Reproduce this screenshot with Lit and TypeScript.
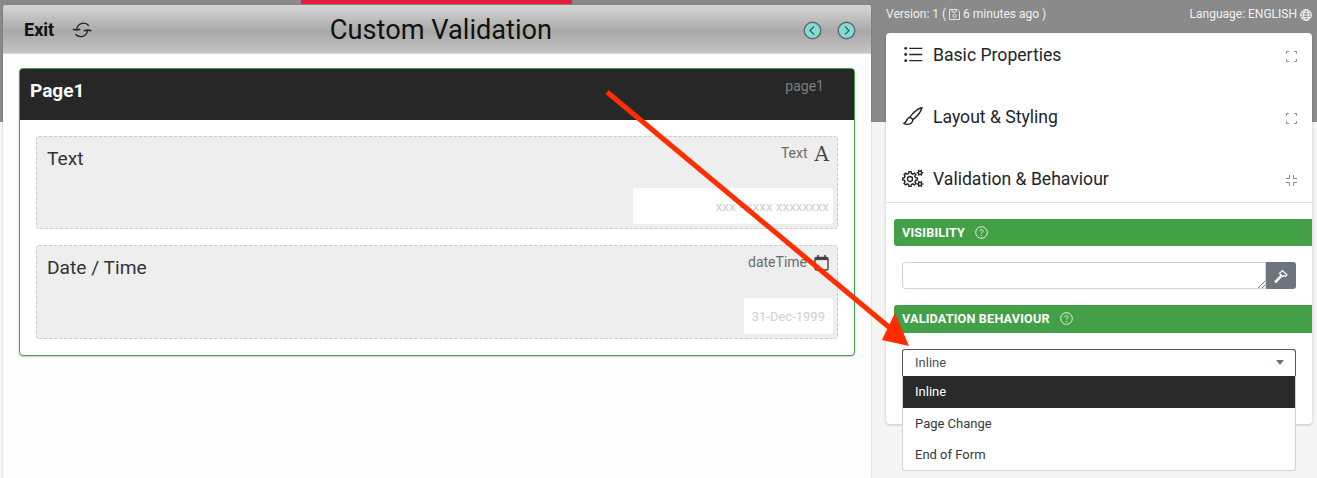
import { LitElement, html, css, svg } from "lit";
import { customElement } from "lit/decorators.js";

function gearPath(cx: number, cy: number, ro: number, ri: number, teeth: number) {
  const pts: string[] = [];
  const step = (Math.PI * 2) / teeth;
  for (let i = 0; i < teeth; i++) {
    const a = i * step;
    const offs: Array<[number, number]> = [[-0.32, ri], [-0.18, ro], [0.18, ro], [0.32, ri]];
    for (const [o, r] of offs) {
      const t = a + o * step;
      pts.push(`${(cx + r * Math.cos(t)).toFixed(2)} ${(cy + r * Math.sin(t)).toFixed(2)}`);
    }
  }
  return `M${pts.join("L")}Z`;
}

const sync = svg`<svg width="20" height="16" viewBox="0 0 20 16" fill="none" stroke="#222" stroke-width="1.400"><path d="M16.800 3.800C13.500-.5 6 .3 4.500 7.500"/><path d="M.8 7.300L4.500 8 8.300 7.300"/><path d="M15.500 8.500C14.500 15.500 7 16 3.500 12.300"/><path d="M11.800 8.800L15.500 8 19.300 8.800"/></svg>`;
const circ = (d: string) => svg`<svg width="19" height="19" viewBox="0 0 19 19"><circle cx="9.500" cy="9.500" r="8.300" fill="#7fded5" stroke="#666" stroke-width="1.400"/><path d="${d}" fill="none" stroke="#555" stroke-width="1.200"/></svg>`;
const listI = svg`<svg width="22" height="20" viewBox="0 0 22 20" fill="none" stroke="#212529" stroke-width="1.300"><circle cx="3.700" cy="3.300" r="1.400" fill="#212529" stroke="none"/><circle cx="3.700" cy="9.500" r="1.400" fill="#212529" stroke="none"/><circle cx="3.700" cy="15.700" r="1.400" fill="#212529" stroke="none"/><path d="M7.300 3.300h13M7.300 9.500h13M7.300 15.700h13"/></svg>`;
const brush = svg`<svg width="22" height="20" viewBox="0 0 22 20" fill="none" stroke="#212529" stroke-width="1.400"><path d="M20 .5C16 1.500 10.500 6 8 10l3 2.600C15 9.500 19 5 20 .5z"/><path d="M8 10.300C4.500 10.500 5 15 2 16.500c2.500 1.500 8.500 1.500 9-4.300"/></svg>`;
const gears = svg`<svg width="22" height="20" viewBox="0 0 22 20" fill="none" stroke="#212529"><path d="${gearPath(8, 10, 7.4, 5.7, 8)}" stroke-width="1.400"/><circle cx="8" cy="10" r="2.500" stroke-width="1.300"/><path d="${gearPath(18, 3.7, 3.4, 2.3, 6)}" fill="#212529" stroke="none"/><circle cx="18" cy="3.700" r="1" fill="#fff" stroke="none"/><path d="${gearPath(18, 15, 3.4, 2.3, 6)}" fill="#212529" stroke="none"/><circle cx="18" cy="15" r="1" fill="#fff" stroke="none"/></svg>`;
const expand = svg`<svg class="tog" width="11" height="11" viewBox="0 0 11 11" fill="none" stroke="#888"><path d="M.5 2.800V.5h2.300M8.200 .5h2.300v2.300M10.500 8.200v2.300H8.200M2.800 10.500H.5V8.200"/></svg>`;
const compress = svg`<svg class="tog" width="11" height="11" viewBox="0 0 11 11" fill="none" stroke="#888"><path d="M3.500 0v3.500H0M7.500 0v3.500H11M7.500 11V7.500H11M3.500 11V7.500H0"/></svg>`;
const help = svg`<svg width="13" height="13" viewBox="0 0 13 13" fill="none" stroke="#e8f3e8"><circle cx="6.500" cy="6.500" r="5.800"/><path d="M4.800 5.200c0-1 .8-1.500 1.700-1.500s1.700.6 1.700 1.400c0 1.200-1.700 1.200-1.700 2.500"/><path d="M6.500 9v1"/></svg>`;
const hammer = svg`<svg width="14" height="14" viewBox="0 0 14 14" fill="none" stroke="#fff" stroke-width="1.200"><path d="M1 12.500l1 1 6-6.500-1-1z"/><path d="M5.500 4.500L8.500 1.500l4.500 4.500-1.500 1.500-1.500-1-1.200 1.200z"/></svg>`;
const calendar = svg`<svg width="15" height="17" viewBox="0 0 15 17" fill="none" stroke="#444" stroke-width="1.400"><rect x="1" y="3.500" width="13" height="12.500" rx="1.500"/><path d="M1 5h13" stroke-width="2.200"/><path d="M4 1v3M11 1v3" stroke-width="1.600"/></svg>`;
const save = svg`<svg width="11" height="11" viewBox="0 0 11 11" fill="none" stroke="#eee" stroke-width=".9"><path d="M.5.500h8l2 2v8H.500z"/><path d="M3 .5v2.500h4V.5"/><circle cx="5.500" cy="6.800" r="1.600"/></svg>`;
const globe = svg`<svg width="12" height="12" viewBox="0 0 11 11" fill="none" stroke="#fff" stroke-width=".9"><circle cx="5.500" cy="5.500" r="4.900"/><ellipse cx="5.500" cy="5.500" rx="2.200" ry="4.900"/><path d="M.6 5.500h9.800M1.200 3h8.600M1.200 8h8.600"/></svg>`;

@customElement("app-root")
export class AppRoot extends LitElement {
  static styles = css`
    :host { display: block; width: 1317px; height: 478px; overflow: hidden; position: relative; font-family: Roboto, "Liberation Sans", sans-serif; background: linear-gradient(#8a8a8a 0 122px, #f5f5f5 122px); }
    .layout { display: grid; grid-template-columns: 868px 426px; column-gap: 15px; padding-left: 3px; height: 478px; }
    .canvas { margin-top: 5px; background: #fdfdfd; box-shadow: 0 0 2px rgba(0,0,0,.25); border-radius: 3px 3px 0 0; position: relative; }
    .ribbon { position: absolute; left: 298px; top: -5px; width: 271px; height: 4px; background: #e71d3d; }
    .head { height: 49px; box-sizing: border-box; padding: 2px 15px 0 21px; display: grid; grid-template-columns: 1fr auto 1fr; align-items: center; background: linear-gradient(#d6d6d6, #a9a9a9 55%, #c4c4c4); border-bottom: 1px dashed #d8d8d8; border-radius: 3px 3px 0 0; }
    .left { display: flex; align-items: center; gap: 18px; font-size: 18px; font-weight: 700; color: #111; }
    .left span { margin-bottom: 2px; }
    .title { font-size: 27.200px; color: #111; line-height: 46px; margin-left: 2px; }
    .nav { display: flex; justify-content: flex-end; gap: 15px; }
    .body { padding: 14px 16px 0; }
    .page { border: 1px solid #43a047; border-radius: 4px; height: 288px; box-sizing: border-box; box-shadow: 0 1px 2px rgba(0,0,0,.2); background: #fff; }
    .page-head { height: 51px; background: #272727; display: flex; justify-content: space-between; padding: 9px 30px 0 10px; box-sizing: border-box; border-radius: 2px 2px 0 0; }
    .page-title { font-size: 19px; font-weight: 700; color: #fff; line-height: 25px; }
    .page-id { font-size: 14px; color: #7d7d7d; line-height: 16px; }
    .fields { display: flex; flex-direction: column; gap: 16px; padding: 16px 16px 0; }
    .field { background: #eee; border: 1px dashed #cbcbcb; border-radius: 3px; box-sizing: border-box; display: flex; flex-direction: column; padding: 8px 4px 4px 10px; }
    .f1 { height: 93px; } .f2 { height: 94px; }
    .row { display: flex; justify-content: space-between; }
    .label { font-size: 19.200px; color: #333; line-height: 28px; }
    .type { display: flex; align-items: flex-start; gap: 7px; font-size: 14px; color: #6b6b6b; padding-right: 4px; line-height: 16px; }
    .letter { font-family: "DejaVu Serif", serif; font-size: 20px; line-height: 18px; color: #444; }
    .input { margin-top: auto; align-self: flex-end; height: 36px; background: #fff; border-radius: 3px; display: flex; align-items: center; justify-content: flex-end; font-size: 13px; color: #cfcfcf; box-sizing: border-box; padding-right: 8px; }
    .w1 { width: 200px; padding-right: 4px; font-size: 13.400px; } .w2 { width: 89px; }
    .side { position: relative; }
    .meta { display: flex; justify-content: space-between; height: 33px; align-items: flex-start; padding-top: 8px; box-sizing: border-box; font-size: 12px; color: #f1f1f1; }
    .meta div { display: flex; align-items: center; gap: 3px; line-height: 13px; }
    .panel { height: 391px; background: #fff; border-radius: 4px; box-shadow: 0 1px 3px rgba(0,0,0,.2); box-sizing: border-box; }
    .sec { height: 62px; display: flex; gap: 9px; padding: 10px 15px 0 16px; box-sizing: border-box; font-size: 17.600px; color: #212529; }
    .sec > svg:first-child { flex: none; margin-top: 2px; }
    .sec span { flex: 1; line-height: 24px; }
    .sec .tog { margin-top: 8px; }
    .sec.open { height: 46px; margin-bottom: 16px; border-bottom: 1px solid #dee2e6; }
    .bar { margin-left: 8px; background: #43a047; color: #fff; font-size: 12.600px; font-weight: 700; display: flex; align-items: center; gap: 10px; padding-left: 8px; letter-spacing: .2px; border-radius: 3px 0 0 3px; box-sizing: border-box; }
    .b1 { height: 27px; } .b2 { height: 28px; padding-bottom: 2px; }
    .vis { display: flex; margin: 16px; height: 27px; }
    .ta { flex: 1; border: 1px solid #ced4da; border-radius: 3px 0 0 3px; background: #fff; position: relative; box-sizing: border-box; }
    .grip { position: absolute; right: 0; bottom: 0; }
    .btn { width: 30px; background: #6c757d; border-radius: 0 3px 3px 0; display: flex; align-items: center; justify-content: center; }
    .select-wrap { margin: 16px 16px 0; position: relative; }
    .select { height: 27px; border: 1px solid #555; border-bottom: none; border-radius: 3px 3px 0 0; box-sizing: border-box; display: flex; align-items: center; justify-content: space-between; padding: 0 11px 2px 12px; font-size: 13px; color: #495057; background: #fff; }
    .caret { width: 0; height: 0; border-left: 4px solid transparent; border-right: 4px solid transparent; border-top: 5px solid #6c757d; }
    .menu { position: absolute; left: 0; right: 0; top: 27px; height: 95px; background: #fff; border: 1px solid #ced4da; border-top: none; border-radius: 0 0 3px 3px; box-sizing: border-box; font-size: 13px; color: #343a40; }
    .opt { height: 31px; display: flex; align-items: center; padding-left: 12px; }
    .opt.on { height: 32px; background: #2a2a2a; color: #fff; padding-bottom: 2px; box-sizing: border-box; }
    .arrow { position: absolute; left: 0; top: 0; pointer-events: none; }
  `;

  render() {
    return html`
      <div class="layout">
        <div class="canvas">
          <div class="ribbon"></div>
          <div class="head">
            <div class="left"><span>Exit</span>${sync}</div>
            <div class="title">Custom Validation</div>
            <div class="nav">${circ("M11 5.500L7 9.500l4 4")}${circ("M8 5.500l4 4-4 4")}</div>
          </div>
          <div class="body">
            <div class="page">
              <div class="page-head"><div class="page-title">Page1</div><div class="page-id">page1</div></div>
              <div class="fields">
                <div class="field f1">
                  <div class="row"><div class="label">Text</div><div class="type">Text <span class="letter">A</span></div></div>
                  <div class="input w1">xxx - xxxx xxxxxxxx</div>
                </div>
                <div class="field f2">
                  <div class="row"><div class="label">Date / Time</div><div class="type">dateTime ${calendar}</div></div>
                  <div class="input w2">31-Dec-1999</div>
                </div>
              </div>
            </div>
          </div>
        </div>
        <div class="side">
          <div class="meta"><div>Version: 1 ( ${save} 6 minutes ago )</div><div>Language: ENGLISH ${globe}</div></div>
          <div class="panel">
            <div class="sec">${listI}<span>Basic Properties</span>${expand}</div>
            <div class="sec">${brush}<span>Layout &amp; Styling</span>${expand}</div>
            <div class="sec open">${gears}<span>Validation &amp; Behaviour</span>${compress}</div>
            <div class="bar b1">VISIBILITY ${help}</div>
            <div class="vis">
              <div class="ta"><svg class="grip" width="8" height="8" viewBox="0 0 8 8" stroke="#555" stroke-width=".8"><path d="M1 8l7-7M5 8l3-3"/></svg></div>
              <div class="btn">${hammer}</div>
            </div>
            <div class="bar b2">VALIDATION BEHAVIOUR ${help}</div>
            <div class="select-wrap">
              <div class="select">Inline<span class="caret"></span></div>
              <div class="menu">
                <div class="opt on">Inline</div>
                <div class="opt">Page Change</div>
                <div class="opt">End of Form</div>
              </div>
            </div>
          </div>
        </div>
      </div>
      <svg class="arrow" width="1317" height="478" viewBox="0 0 1317 478">
        <path d="M607 92L890 328" stroke="#ff2d00" stroke-width="5" fill="none"/>
        <path d="M909 346L882 340L895 313Z" fill="#ff2d00"/>
      </svg>
    `;
  }
}
